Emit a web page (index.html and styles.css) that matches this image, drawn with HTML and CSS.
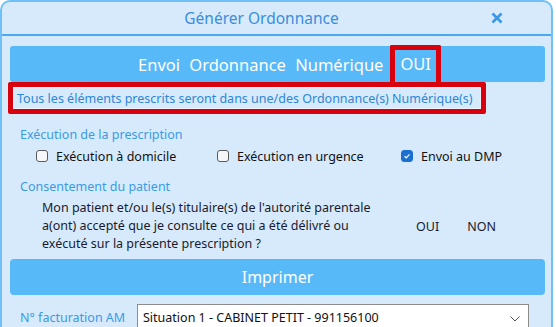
FILE: index.html
```html
<!DOCTYPE html>
<html lang="fr">
<head>
<meta charset="utf-8">
<title>Générer Ordonnance</title>
<link rel="stylesheet" href="styles.css">
</head>
<body>
<div class="dialog">
  <div class="header">
    <span class="title">Générer Ordonnance</span>
    <span class="close">
      <svg width="12" height="12" viewBox="0 0 12 12"><path d="M1.5 1.5 L10.5 10.5 M10.5 1.5 L1.5 10.5" stroke="#3a97e4" stroke-width="2.6" stroke-linecap="butt"/></svg>
    </span>
  </div>
  <div class="content">
    <div class="numbar">
      <span class="numtext">Envoi Ordonnance Numérique</span>
      <span class="oui-box">OUI</span>
    </div>
    <div class="notice-row">
      <div class="notice">Tous les éléments prescrits seront dans une/des Ordonnance(s) Numérique(s)</div>
    </div>
    <div class="section-title exec-title">Exécution de la prescription</div>
    <div class="checks">
      <label class="check c1"><span class="box"></span>Exécution à domicile</label>
      <label class="check c2"><span class="box"></span>Exécution en urgence</label>
      <label class="check c3"><span class="box checked"><svg width="8" height="8" viewBox="0 0 8 8"><path d="M1.5 4.2 L3.3 5.8 L6.5 2.3" fill="none" stroke="#fff" stroke-width="1.2"/></svg></span>Envoi au DMP</label>
    </div>
    <div class="section-title consent-title">Consentement du patient</div>
    <div class="consent">
      <p class="consent-text">Mon patient et/ou le(s) titulaire(s) de l'autorité parentale a(ont) accepté que je consulte ce qui a été délivré ou exécuté sur la présente prescription ?</p>
      <span class="opt opt-oui">OUI</span>
      <span class="opt opt-non">NON</span>
    </div>
    <div class="print">Imprimer</div>
    <div class="billing">
      <span class="billing-label">N° facturation AM</span>
      <div class="select">
        <span>Situation 1 - CABINET PETIT - 991156100</span>
        <svg class="chev" width="10" height="6" viewBox="0 0 10 6"><path d="M0.5 0.5 L5 5 L9.5 0.5" fill="none" stroke="#555" stroke-width="1"/></svg>
      </div>
    </div>
  </div>
</div>
</body>
</html>
```

FILE: styles.css
```css
* { box-sizing: border-box; }
html, body { margin: 0; padding: 0; background: #ffffff; }
body {
  font-family: "Noto Sans", "Open Sans", sans-serif;
  width: 556px;
  height: 327px;
  overflow: hidden;
}
.dialog {
  width: 553px;
  height: 360px;
  background: #d6eafc;
  border: 2px solid #6fc0f6;
  border-bottom: none;
  border-radius: 10px 10px 0 0;
}
.header {
  height: 34px;
  border-bottom: 2px solid #4ba9ee;
  display: flex;
  align-items: center;
  justify-content: center;
  padding-right: 30px;
  position: relative;
}
.title {
  color: #3a8edb;
  font-size: 15.5px;
  margin-top: -1px;
}
.close {
  position: absolute;
  left: 489px;
  top: 10px;
  display: flex;
}
.content {
  padding: 10px 6px 0 8px;
}
.numbar {
  height: 36px;
  background: #57b9f8;
  border-radius: 3px;
  display: flex;
  align-items: center;
  justify-content: center;
  color: #ffffff;
  font-size: 16.5px;
  padding-left: 24px;
}
.numtext { word-spacing: 5px; margin-right: 7px; }
.oui-box {
  border: 5px solid #d8000c;
  border-bottom: none;
  height: 37px;
  margin-top: -1px;
  padding: 0 5px 5px;
  display: flex;
  align-items: center;
  border-radius: 2px 2px 0 0;
}
.notice-row { display: flex; }
.notice {
  margin-left: -2px;
  border: 5px solid #d8000c;
  border-radius: 2px;
  height: 32px;
  width: 478px;
  display: flex;
  align-items: center;
  padding-left: 4px;
  color: #2d86d8;
  font-size: 12.5px;
  box-shadow: inset 0 0 0 1px #eaf4fe;
}
.section-title {
  color: #3a9ae6;
  font-size: 12.5px;
  padding-left: 10px;
}
.exec-title { margin-top: 12px; }
.checks {
  display: flex;
  align-items: center;
  margin-top: 4px;
  height: 18px;
  font-size: 12.5px;
  color: #111;
}
.check { display: flex; align-items: center; }
.c1 { margin-left: 26px; width: 181px; }
.c2 { width: 184px; }
.box {
  width: 12px;
  height: 12px;
  border: 1px solid #5b5b5b;
  border-radius: 3px;
  background: #f5f7fa;
  margin-right: 8px;
  display: flex;
  align-items: center;
  justify-content: center;
}
.box.checked { background: #1a6fd0; border-color: #1a6fd0; }
.consent-title { margin-top: 13px; }
.consent {
  display: flex;
  align-items: center;
  margin-top: 4px;
  font-size: 12.5px;
  color: #1a1a2e;
}
.consent-text {
  margin: 0 0 0 32px;
  width: 340px;
  line-height: 18px;
}
.opt-oui { margin-left: 34px; }
.opt-non { margin-left: 28px; }
.print {
  margin-top: 6px;
  height: 36px;
  background: #57b9f8;
  border-radius: 4px;
  color: #ffffff;
  font-size: 16px;
  display: flex;
  align-items: center;
  justify-content: center;
}
.billing {
  display: flex;
  align-items: center;
  margin-top: 9px;
}
.billing-label {
  color: #3a9ae6;
  font-size: 12.5px;
  padding-left: 10px;
  width: 127px;
}
.select {
  width: 392px;
  height: 26px;
  background: #ffffff;
  border: 1px solid #8c8c8c;
  display: flex;
  align-items: center;
  justify-content: space-between;
  padding: 0 8px 0 5px;
  font-size: 12.5px;
  color: #111;
}
.chev { margin-top: 3px; }
```
